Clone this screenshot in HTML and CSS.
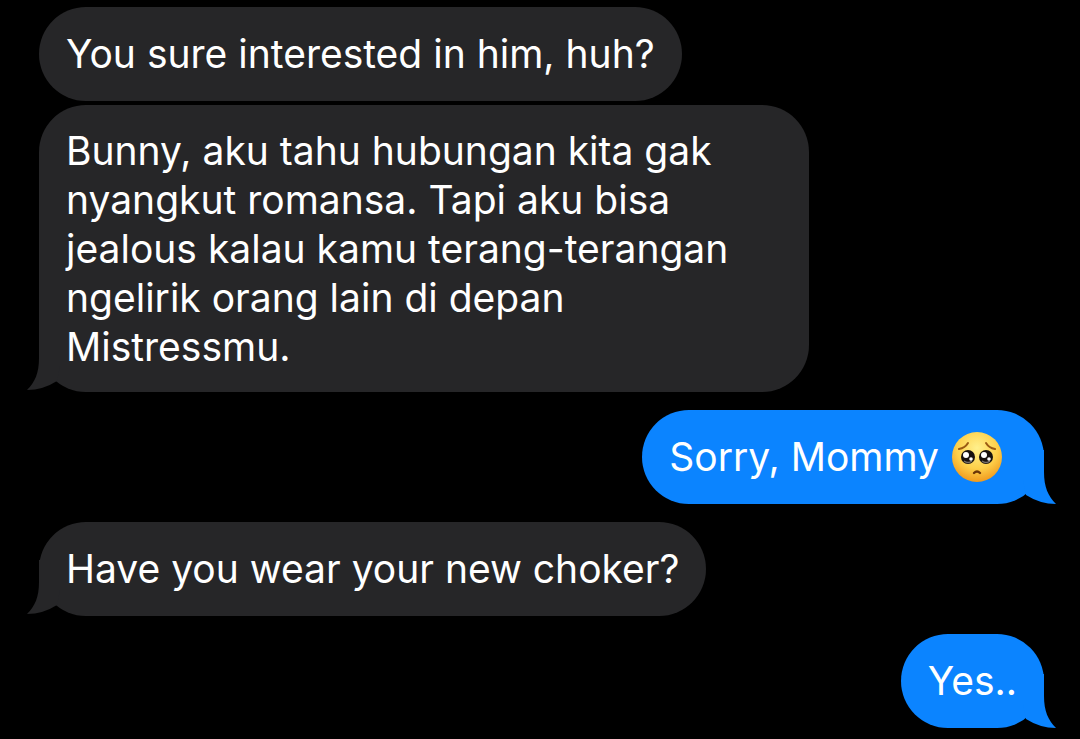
FILE: index.html
```
<!DOCTYPE html>
<html lang="id">
<head>
    <meta charset="UTF-8">
    <meta name="viewport" content="width=device-width, initial-scale=1">
    <title>Messages</title>
    <link rel="stylesheet" href="styles.css">
</head>
<body>
<svg class="defs" aria-hidden="true">
    <symbol id="tail" viewBox="0 0 33 54">
        <path d="M12 0V22C12 37 8 46 0 54Q16 54 30 45L33 30V0Z"/>
    </symbol>
</svg>
<main class="chat">
    <div class="msg">You sure interested in him, huh?</div>
    <div class="msg wide tailed">Bunny, aku tahu hubungan kita gak nyangkut romansa. Tapi aku bisa jealous kalau kamu terang-terangan ngelirik orang lain di depan Mistressmu.
        <svg class="tail" aria-hidden="true"><use href="#tail"/></svg>
    </div>
    <div class="msg sent tailed with-emoji">
        <span>Sorry, Mommy</span>
        <svg class="emoji" viewBox="0 0 52 52" role="img" aria-label="pleading face">
            <defs>
                <radialGradient id="face" cx="50%" cy="32%" r="68%">
                    <stop offset="0" stop-color="#fff08c"/>
                    <stop offset=".6" stop-color="#fed04a"/>
                    <stop offset="1" stop-color="#f09a1e"/>
                </radialGradient>
            </defs>
            <circle cx="26" cy="26" r="25" fill="url(#face)"/>
            <g fill="none" stroke="#9a5a12" stroke-width="2" stroke-linecap="round">
                <path d="M8 18Q14 17 17 12M35 12Q38 17 44 18"/>
                <path d="M23 42Q26 39 29 42" stroke="#6b3508" stroke-width="2.4"/>
            </g>
            <circle cx="17" cy="26" r="7" fill="#17110e"/>
            <circle cx="35" cy="26" r="7" fill="#17110e"/>
            <path d="M13 30Q17 33 21 30M31 30Q35 33 39 30" fill="none" stroke="#77706c" stroke-width="1.4"/>
            <g fill="#fff">
                <circle cx="15" cy="24" r="3"/><circle cx="33" cy="24" r="3"/>
                <circle cx="20" cy="28" r="1.8"/><circle cx="38" cy="28" r="1.8"/>
            </g>
        </svg>
        <svg class="tail" aria-hidden="true"><use href="#tail"/></svg>
    </div>
    <div class="msg tailed">Have you wear your new choker?
        <svg class="tail" aria-hidden="true"><use href="#tail"/></svg>
    </div>
    <div class="msg sent tailed">Yes..
        <svg class="tail" aria-hidden="true"><use href="#tail"/></svg>
    </div>
</main>
</body>
</html>
```
FILE: styles.css
```
body{
    margin: 0;
    background: #000;
    color: #fff;
    font-family: Inter, "Liberation Sans", sans-serif;
}
.defs{ display: block;width: 0;height: 0; }
.chat{
    display: flex;
    flex-direction: column;
    align-items: flex-start;
    padding: 7px 36px 11px 39px;
}
.msg{
    position: relative;
    box-sizing: border-box;
    max-width: 770px;
    padding: 22px 27px 23px;
    border-radius: 47px;
    background: #262628;
    font-size: 39px;
    line-height: 49px;
    margin-bottom: 4px;
}
.msg.tailed{ margin-bottom: 18px; }
.chat .msg:last-child{ margin-bottom: 0; }
.msg.wide{ padding: 21px 72px 21px 27px; }
.sent{
    align-self: flex-end;
    background: #0b84ff;
}
.tail{
    position: absolute;
    left: -12px;
    bottom: 2px;
    width: 33px;
    height: 54px;
    fill: #262628;
}
.sent .tail{
    left: auto;
    right: -12px;
    bottom: 0;
    transform: scaleX(-1);
    fill: #0b84ff;
}
.with-emoji{
    display: flex;
    align-items: center;
    gap: 12px;
    padding-right: 41px;
}
.emoji{
    width: 52px;
    height: 52px;
    margin: -2px 0;
}
```
